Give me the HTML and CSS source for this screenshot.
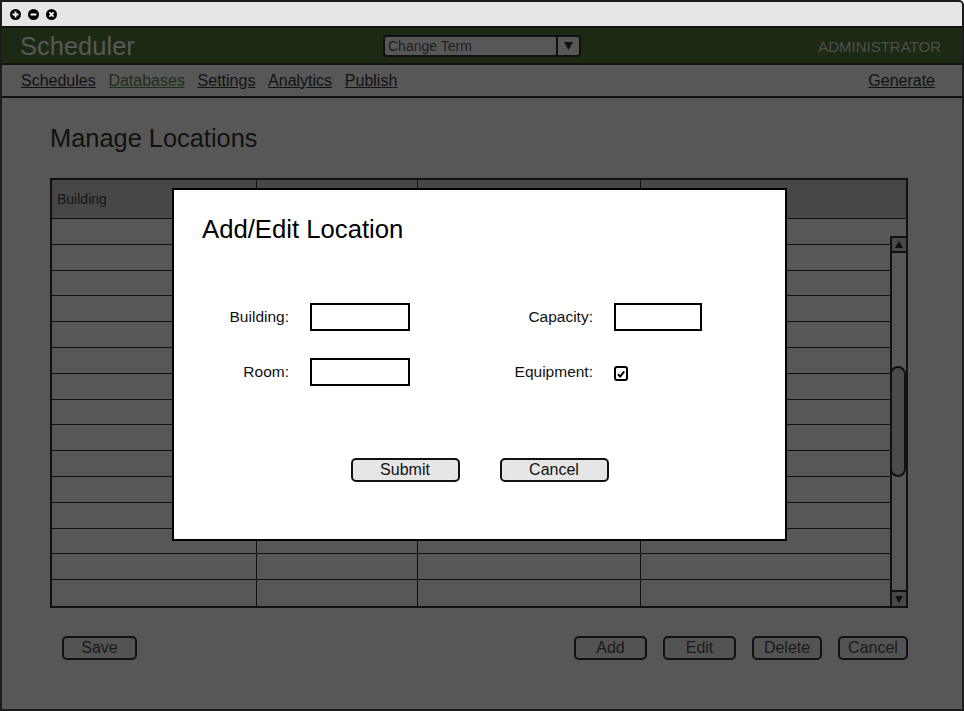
FILE: index.html
```html
<!DOCTYPE html>
<html>
<head>
<meta charset="utf-8">
<title>Scheduler - Manage Locations</title>
<link rel="stylesheet" href="styles.css">
</head>
<body>
<div class="window">
  <div class="titlebar">
    <svg class="winbtn" viewBox="0 0 11 11" width="11" height="11"><circle cx="5.5" cy="5.5" r="5.5" fill="#000"/><path d="M5.5 2.6v5.8M2.6 5.5h5.8" stroke="#fff" stroke-width="1.8"/></svg>
    <svg class="winbtn" viewBox="0 0 11 11" width="11" height="11"><circle cx="5.5" cy="5.5" r="5.5" fill="#000"/><path d="M2.6 5.5h5.8" stroke="#fff" stroke-width="1.8"/></svg>
    <svg class="winbtn" viewBox="0 0 11 11" width="11" height="11"><circle cx="5.5" cy="5.5" r="5.5" fill="#000"/><path d="M3.4 3.4l4.2 4.2M7.6 3.4l-4.2 4.2" stroke="#fff" stroke-width="1.6"/></svg>
  </div>

  <header class="appbar">
    <div class="brand">Scheduler</div>
    <div class="select">
      <span class="select-text">Change Term</span>
      <span class="select-arrow"><svg viewBox="0 0 9 8" width="9" height="8"><path d="M0 0h9L4.5 8z" fill="#111"/></svg></span>
    </div>
    <div class="role">ADMINISTRATOR</div>
  </header>

  <nav class="navbar">
    <div class="nav-links">
      <a class="nav-link">Schedules</a>
      <a class="nav-link nav-link-active">Databases</a>
      <a class="nav-link">Settings</a>
      <a class="nav-link">Analytics</a>
      <a class="nav-link">Publish</a>
    </div>
    <a class="nav-link">Generate</a>
  </nav>

  <main class="content">
    <h1 class="page-title">Manage Locations</h1>
    <div class="datagrid">
      <div class="grid-head">
        <div class="cell">Building</div><div class="cell"></div><div class="cell"></div><div class="cell"></div>
      </div>
      <div class="grid-body">
        <div class="rows">
          <div class="row"><span class="cell"></span><span class="cell"></span><span class="cell"></span><span class="cell"></span></div>
          <div class="row"><span class="cell"></span><span class="cell"></span><span class="cell"></span><span class="cell"></span></div>
          <div class="row"><span class="cell"></span><span class="cell"></span><span class="cell"></span><span class="cell"></span></div>
          <div class="row"><span class="cell"></span><span class="cell"></span><span class="cell"></span><span class="cell"></span></div>
          <div class="row"><span class="cell"></span><span class="cell"></span><span class="cell"></span><span class="cell"></span></div>
          <div class="row"><span class="cell"></span><span class="cell"></span><span class="cell"></span><span class="cell"></span></div>
          <div class="row"><span class="cell"></span><span class="cell"></span><span class="cell"></span><span class="cell"></span></div>
          <div class="row"><span class="cell"></span><span class="cell"></span><span class="cell"></span><span class="cell"></span></div>
          <div class="row"><span class="cell"></span><span class="cell"></span><span class="cell"></span><span class="cell"></span></div>
          <div class="row"><span class="cell"></span><span class="cell"></span><span class="cell"></span><span class="cell"></span></div>
          <div class="row"><span class="cell"></span><span class="cell"></span><span class="cell"></span><span class="cell"></span></div>
          <div class="row"><span class="cell"></span><span class="cell"></span><span class="cell"></span><span class="cell"></span></div>
          <div class="row"><span class="cell"></span><span class="cell"></span><span class="cell"></span><span class="cell"></span></div>
          <div class="row"><span class="cell"></span><span class="cell"></span><span class="cell"></span><span class="cell"></span></div>
          <div class="row"><span class="cell"></span><span class="cell"></span><span class="cell"></span><span class="cell"></span></div>
        </div>
        <div class="scrollbar">
          <div class="scroll-btn scroll-up"><svg viewBox="0 0 8 7" width="8" height="7"><path d="M4 0l4 7H0z" fill="#111"/></svg></div>
          <div class="scroll-track"><div class="scroll-thumb"></div></div>
          <div class="scroll-btn scroll-down"><svg viewBox="0 0 8 7" width="8" height="7"><path d="M0 0h8L4 7z" fill="#111"/></svg></div>
        </div>
      </div>
    </div>
    <div class="actions">
      <button class="btn btn-save">Save</button>
      <div class="actions-right">
        <button class="btn btn-wide">Add</button>
        <button class="btn btn-wide">Edit</button>
        <button class="btn btn-narrow">Delete</button>
        <button class="btn btn-narrow">Cancel</button>
      </div>
    </div>
  </main>

  <div class="modal">
    <h2 class="modal-title">Add/Edit Location</h2>
    <div class="form">
      <label class="form-label">Building:</label>
      <div class="input"></div>
      <label class="form-label">Capacity:</label>
      <div class="input"></div>
      <label class="form-label">Room:</label>
      <div class="input"></div>
      <label class="form-label">Equipment:</label>
      <div class="checkbox"><svg viewBox="0 0 10 10" width="10" height="10"><path d="M2 5.2l2.2 2.3L8.2 2.4" fill="none" stroke="#000" stroke-width="2"/></svg></div>
    </div>
    <div class="modal-actions">
      <button class="btn btn-light">Submit</button>
      <button class="btn btn-light">Cancel</button>
    </div>
  </div>
</div>
</body>
</html>
```

FILE: styles.css
```css
* { box-sizing: border-box; }

html, body {
  margin: 0;
  padding: 0;
  background: #ffffff;
}

body {
  font-family: "Liberation Sans", Arial, sans-serif;
  color: #111;
}

.window {
  position: relative;
  width: 964px;
  height: 711px;
  border: 2px solid #1c1c1c;
  border-top-right-radius: 5px;
  display: flex;
  flex-direction: column;
  overflow: hidden;
  background: #575757;
}

/* title bar */
.titlebar {
  height: 26px;
  flex: none;
  background: #e6e6e6;
  border-bottom: 2px solid #111;
  display: flex;
  align-items: center;
  gap: 7px;
  padding-left: 8px;
}
.winbtn { display: block; }

/* app bar */
.appbar {
  height: 37px;
  flex: none;
  background: #1c2a14;
  border-bottom: 2px solid #111;
  display: grid;
  grid-template-columns: 1fr auto 1fr;
  align-items: center;
}
.brand {
  font-size: 25.5px;
  color: #585858;
  padding-left: 18px;
  line-height: 30px;
}
.select {
  width: 198px;
  height: 22px;
  border: 2px solid #111;
  border-radius: 4px;
  background: #575757;
  display: flex;
  margin-top: 1px;
}
.select-text {
  flex: 1;
  font-size: 14px;
  line-height: 18px;
  color: #1e1e1e;
  padding-left: 3px;
}
.select-arrow {
  width: 23px;
  border-left: 2px solid #111;
  display: flex;
  align-items: center;
  justify-content: center;
}
.select-arrow svg { display: block; }
.role {
  text-align: right;
  padding-right: 21px;
  font-size: 15px;
  color: #4f4f4f;
  margin-top: 2px;
}

/* navigation */
.navbar {
  height: 33px;
  flex: none;
  background: #575757;
  border-bottom: 2px solid #111;
  display: flex;
  justify-content: space-between;
  align-items: center;
  padding: 0 27px 0 19px;
}
.nav-links {
  display: flex;
  gap: 12.7px;
}
.nav-link {
  font-size: 16px;
  color: #111;
  text-decoration: underline;
  line-height: 20px;
}
.nav-link-active { color: #1e2d15; }

/* content */
.content {
  flex: 1;
  padding: 25px 54px 0 48px;
  background: #575757;
}
.page-title {
  margin: 0;
  font-size: 25.4px;
  font-weight: normal;
  line-height: 30px;
  color: #111;
}

.datagrid {
  margin-top: 25px;
  height: 430px;
  border: 2px solid #111;
  display: flex;
  flex-direction: column;
}
.grid-head {
  height: 39px;
  flex: none;
  background: #474747;
  border-bottom: 1px solid #111;
  display: grid;
  grid-template-columns: 205px 161px 223px 1fr;
}
.grid-head .cell {
  font-size: 14px;
  line-height: 38px;
  padding-left: 5px;
  color: #151515;
}
.cell { border-right: 1px solid #111; }
.cell:last-child { border-right: none; }

.grid-body {
  flex: 1;
  display: flex;
}
.rows {
  flex: 1;
  display: grid;
  grid-template-rows: repeat(15, 1fr);
}
.row {
  display: grid;
  grid-template-columns: 205px 161px 223px 1fr;
  border-bottom: 1px solid #111;
}
.row:last-child { border-bottom: none; }

.scrollbar {
  width: 16px;
  flex: none;
  margin-top: 17px;
  border-left: 2px solid #111;
  display: flex;
  flex-direction: column;
}
.scroll-btn {
  height: 17px;
  flex: none;
  background: #484848;
  display: flex;
  align-items: center;
  justify-content: center;
}
.scroll-btn svg { display: block; }
.scroll-up {
  border-top: 2px solid #111;
  border-bottom: 2px solid #111;
}
.scroll-down {
  height: 16px;
  border-top: 2px solid #111;
}
.scroll-track {
  flex: 1;
}
.scroll-thumb {
  margin-top: 113px;
  margin-left: -2px;
  width: 16px;
  height: 111px;
  border: 2px solid #111;
  border-radius: 8px;
  background: #4b4b4b;
}

/* buttons */
.btn {
  font-family: "Liberation Sans", Arial, sans-serif;
  font-size: 16px;
  height: 24px;
  padding: 0;
  border: 2px solid #111;
  border-radius: 5px;
  background: #535353;
  color: #1a1a1a;
  line-height: 18px;
}
.actions {
  margin-top: 28px;
  display: flex;
  justify-content: space-between;
  padding-left: 12px;
}
.actions-right {
  display: flex;
  gap: 16px;
}
.btn-save { width: 75px; }
.btn-wide { width: 73px; }
.btn-narrow { width: 70px; }

/* modal */
.modal {
  position: absolute;
  left: 170px;
  top: 186px;
  width: 615px;
  height: 353px;
  background: #fff;
  border: 2px solid #000;
  padding-top: 24px;
}
.modal-title {
  margin: 0;
  padding-left: 28px;
  font-size: 25.7px;
  font-weight: normal;
  line-height: 30px;
  color: #000;
}
.form {
  margin-top: 59px;
  display: grid;
  grid-template-columns: 136px 100px 204px 88px;
  grid-template-rows: 28px 28px;
  row-gap: 27px;
  align-items: center;
}
.form-label {
  text-align: right;
  padding-right: 21px;
  font-size: 15.5px;
  color: #111;
}
.input {
  height: 28px;
  border: 2px solid #000;
  background: #fff;
}
.checkbox {
  width: 14px;
  height: 15px;
  border: 2px solid #000;
  border-radius: 3px;
  display: flex;
  align-items: center;
  justify-content: center;
  margin-top: 3px;
}
.checkbox svg { display: block; }
.modal-actions {
  margin-top: 72px;
  display: flex;
  justify-content: center;
  gap: 40px;
}
.btn-light {
  width: 109px;
  background: #e6e6e6;
  color: #111;
}
```
